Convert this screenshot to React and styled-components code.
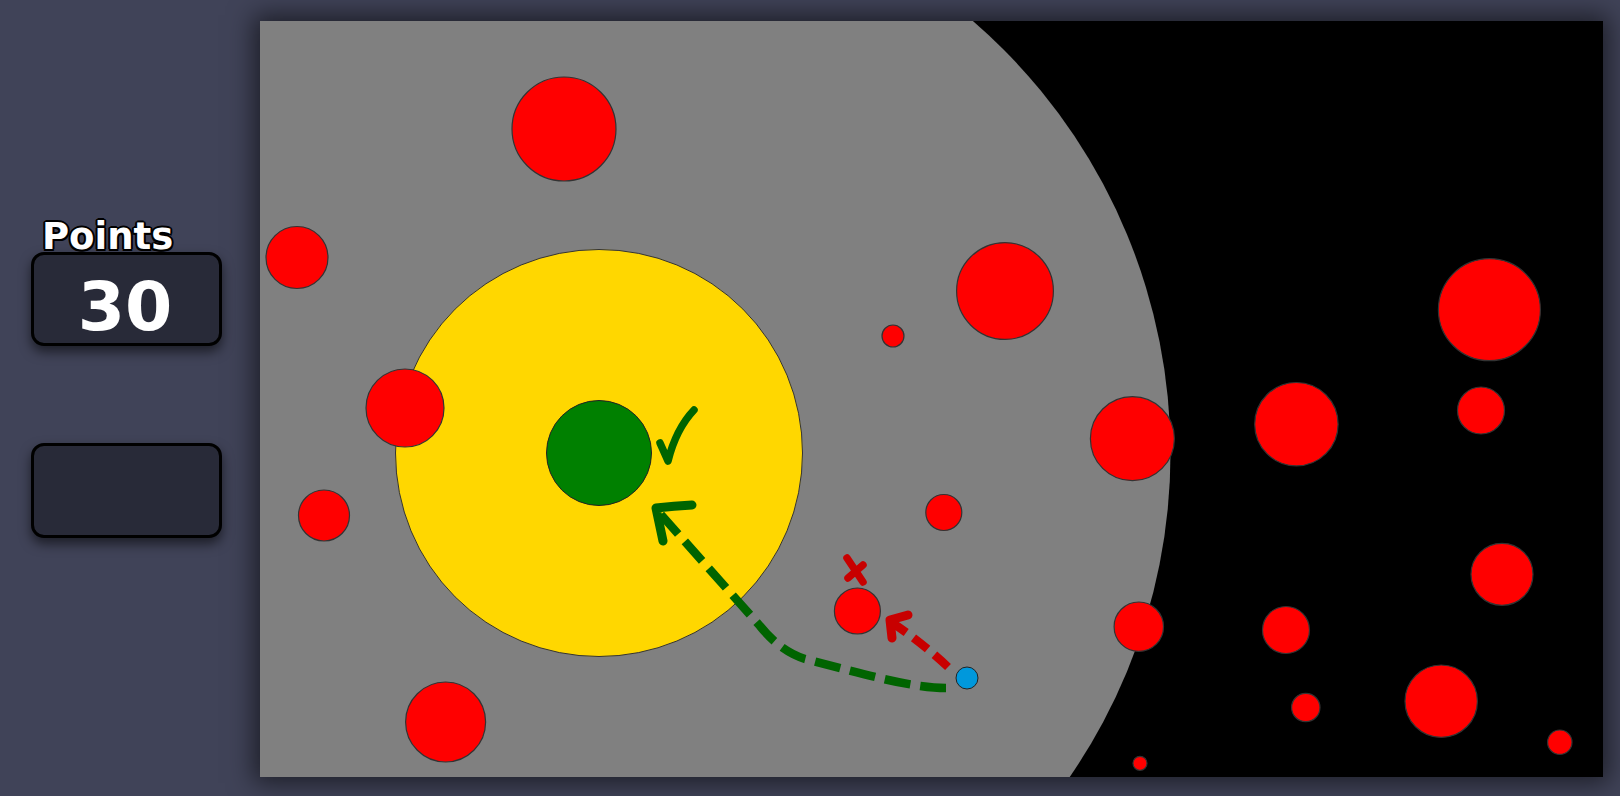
import React from 'react';
import styled, { createGlobalStyle } from 'styled-components';

const GlobalStyle = createGlobalStyle`
    html, body {
        margin: 0;
        padding: 0;
        background: #404358;
        overflow: hidden;
    }
`

const Page = styled.div`
    display: flex;
    width: 1620px;
    height: 796px;
    background: #404358;
    font-family: "DejaVu Sans", Verdana, sans-serif;
`

const Sidebar = styled.div`
    width: 260px;
    box-sizing: border-box;
    padding: 218px 38px 0 31px;
    display: flex;
    flex-direction: column;
`

const Label = styled.div`
    font-size: 37px;
    line-height: 37px;
    font-weight: bold;
    color: #fff;
    padding-left: 11px;
    margin-bottom: -3px;
    text-shadow: 2px 0 #000, -2px 0 #000, 0 2px #000, 0 -2px #000,
        1.5px 1.5px #000, -1.5px 1.5px #000, 1.5px -1.5px #000, -1.5px -1.5px #000;
`

const ScoreBox = styled.div`
    position: relative;
    box-sizing: border-box;
    height: ${p => p.$height}px;
    margin-top: ${p => p.$gap || 0}px;
    background: #282a38;
    border: 3px solid #000;
    border-radius: 13px;
    box-shadow: 0 6px 12px rgba(0, 0, 0, 0.55);
    color: #fff;
    text-align: center;
`

const ScoreValue = styled.div`
    padding-top: 12px;
    font-size: 68px;
    line-height: 79px;
    font-weight: bold;
    padding-right: 3px;
`

const Board = styled.div`
    margin-top: 21px;
    width: 1343px;
    height: 756px;
    background: #000;
    box-shadow: 0 0 24px 6px rgba(0, 0, 0, 0.55);
    overflow: hidden;
`

const Field = styled.svg`
    display: block;
`

const obstacles = [
    [304, 108, 52], [37, 236.5, 31], [145, 387, 39], [64, 494.5, 25.5],
    [185.6, 701, 40], [745, 270, 48.4], [633, 315, 11], [872.4, 417.7, 42],
    [683.8, 491.5, 18], [597.4, 590, 23], [878.8, 605.7, 24.7], [880, 742.3, 7],
    [1036.4, 403.2, 41.7], [1229.4, 288.7, 51], [1221, 389.5, 23.5],
    [1242, 553.3, 31], [1026, 609, 23.5], [1045.8, 686.5, 14.2],
    [1181.2, 680.2, 36.2], [1299.8, 721.2, 12.2],
]

const GOOD = '#006400'
const BAD = '#c80000'

function GameField() {
    return (
        <Field width="1343" height="756" viewBox="0 0 1343 756">
            <rect x="0" y="0" width="1343" height="756" fill="#000" />
            <circle cx="339.5" cy="432" r="571" fill="#808080" />
            <circle cx="339" cy="432" r="203.5" fill="#ffd700" stroke="#333" strokeWidth="1" />
            <circle cx="339" cy="432" r="52.5" fill="#008000" stroke="#222" strokeWidth="1" />
            {obstacles.map(([x, y, r], i) => (
                <circle key={i} cx={x} cy={y} r={r} fill="#ff0000" stroke="#333" strokeWidth="1.2" />
            ))}

            {/* good path */}
            <g fill="none" stroke={GOOD} strokeLinecap="round" strokeLinejoin="round">
                <path d="M400 422 L408 440 Q416 408 434 389" strokeWidth="7.5" />
                <path d="M686 667 C650 667 600 652 545 638 Q520 630 500 605 L396 488" strokeWidth="8.5" strokeDasharray="26 10" strokeLinecap="butt" />
                <path d="M432 484 Q414 485 396 487 L403 520" strokeWidth="9" />
            </g>

            {/* bad path */}
            <g fill="none" stroke={BAD} strokeLinecap="round" strokeLinejoin="round">
                <path d="M688 646 Q660 620 631 601" strokeWidth="8.5" strokeDasharray="18 9" strokeLinecap="butt" />
                <path d="M648 594 L630 599 L632 617" strokeWidth="9" />
                <path d="M587 537 L603 561 M603 544 L588 557" strokeWidth="7.5" />
            </g>

            <circle cx="707" cy="657" r="11" fill="#0098dc" stroke="#222" strokeWidth="1" />
        </Field>
    )
}

export default function App() {
    return (
        <>
            <GlobalStyle />
            <Page>
                <Sidebar>
                    <Label>Points</Label>
                    <ScoreBox $height={94}>
                        <ScoreValue>30</ScoreValue>
                    </ScoreBox>
                    <ScoreBox $height={95} $gap={97} />
                </Sidebar>
                <Board>
                    <GameField />
                </Board>
            </Page>
        </>
    )
}
